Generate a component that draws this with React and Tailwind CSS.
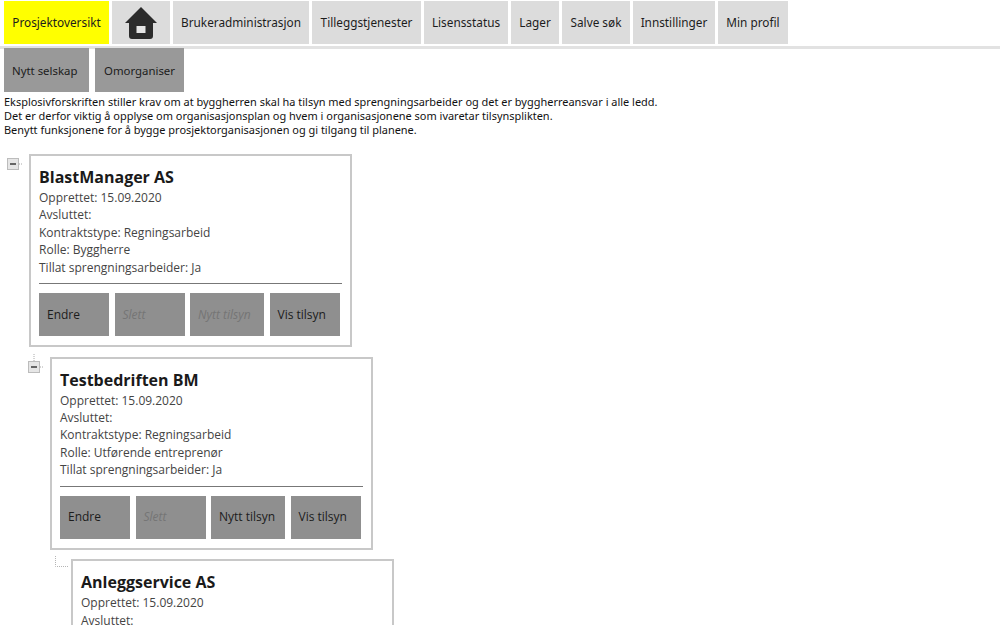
const navItems = [
  { label: 'Brukeradministrasjon', w: 'w-[136px]' },
  { label: 'Tilleggstjenester', w: 'w-[109px]' },
  { label: 'Lisensstatus', w: 'w-[84px]' },
  { label: 'Lager', w: 'w-[48px]' },
  { label: 'Salve søk', w: 'w-[68px]' },
  { label: 'Innstillinger', w: 'w-[82px]' },
  { label: 'Min profil', w: 'w-[70px]' },
];

const companies = [
  { name: 'BlastManager AS', rolle: 'Byggherre', nyttDisabled: true, icon: 'root', indent: 'ml-[7px]', gap: 'gap-[6px]' },
  { name: 'Testbedriften BM', rolle: 'Utførende entreprenør', nyttDisabled: false, icon: 'box', indent: 'ml-[28px]', gap: 'gap-[6px]' },
  { name: 'Anleggservice AS', rolle: 'Utførende entreprenør', nyttDisabled: false, icon: 'corner', indent: 'ml-[55px]', gap: 'gap-[3px]' },
];

function HomeIcon() {
  return (
    <svg width="34" height="34" viewBox="0 0 34 34">
      <path d="M17 1 L33 17 L29 17 L29 30 Q29 33 26 33 L8 33 Q5 33 5 30 L5 17 L1 17 Z" fill="#2b2b2b" />
      <rect x="12.5" y="20" width="9" height="7" fill="#e4e4e4" />
    </svg>
  );
}

function BoxIcon({ stem }) {
  return (
    <svg width="16" height="20" viewBox="0 0 16 20" className="shrink-0 overflow-visible">
      {stem && <path d="M6 -3 V4" stroke="#aaa" strokeDasharray="1 1" />}
      <rect x="0.5" y="4.5" width="11" height="11" fill="#e6e6e6" stroke="#bcbcbc" />
      <rect x="3" y="9" width="6" height="2" fill="#666" />
      <path d="M12 10 H16" stroke="#aaa" strokeDasharray="1 1" />
    </svg>
  );
}

function CornerIcon() {
  return (
    <svg width="13" height="12" viewBox="0 0 13 12" className="shrink-0 -mt-[3px]">
      <path d="M0.5 0 V10.5 H13" fill="none" stroke="#b5b5b5" strokeDasharray="1 1" />
    </svg>
  );
}

function CardButton({ label, disabled, w = 'w-[70px]' }) {
  return (
    <div className={`${w} h-[43px] bg-[#8f8f8f] flex items-center pl-[8px] text-[12px] font-['Open_Sans',sans-serif] ${disabled ? 'italic text-[#757575]' : 'font-medium text-[#1c1c1c]'}`}>
      {label}
    </div>
  );
}

function Card({ c }) {
  return (
    <div className={`${c.indent} flex items-start ${c.gap}`}>
      {c.icon === 'corner' ? <CornerIcon /> : <BoxIcon stem={c.icon === 'box'} />}
      <div className="w-[323px] border-2 border-[#c8c8c8] pt-[9px] pb-[9px] px-[8px] font-['Open_Sans',sans-serif] bg-white">
        <div className="text-[16px] leading-[24px] font-bold text-[#1a1a1a]">{c.name}</div>
        <div className="text-[12px] leading-[17.4px] text-[#444]">
          <div>Opprettet: 15.09.2020</div>
          <div>Avsluttet:</div>
          <div>Kontraktstype: Regningsarbeid</div>
          <div>Rolle: {c.rolle}</div>
          <div>Tillat sprengningsarbeider: Ja</div>
        </div>
        <div className="h-px bg-[#777] mt-[7px] mb-[9px]" />
        <div className="flex gap-[5.5px]">
          <CardButton label="Endre" />
          <CardButton label="Slett" disabled />
          <CardButton label="Nytt tilsyn" disabled={c.nyttDisabled} w="w-[74px]" />
          <CardButton label="Vis tilsyn" />
        </div>
      </div>
    </div>
  );
}

export default function App() {
  return (
    <div className="h-[625px] overflow-hidden bg-white text-black font-['Noto_Sans',sans-serif]">
      {/* top menu */}
      <nav className="flex gap-[3px] pl-[4px] pt-px h-[49px] border-b-[3px] border-[#e2e2e2] text-[11.8px] text-[#1c1c1c]">
        <div className="w-[105px] h-[43px] bg-[#ffff00] flex items-center justify-center pt-[1px]">Prosjektoversikt</div>
        <div className="w-[58px] h-[43px] bg-[#dcdcdc] flex items-center justify-center"><HomeIcon /></div>
        {navItems.map((item) => (
          <div key={item.label} className={`${item.w} h-[43px] bg-[#dcdcdc] flex items-center justify-center pt-[1px]`}>{item.label}</div>
        ))}
      </nav>

      {/* actions */}
      <div className="flex gap-[6px] pl-[4px] -mt-px text-[11.4px] text-[#1c1c1c]">
        <div className="w-[85px] h-[44px] bg-[#999] flex items-center pl-[8px] pt-[1px]">Nytt selskap</div>
        <div className="w-[89px] h-[44px] bg-[#999] flex items-center justify-center pt-[1px]">Omorganiser</div>
      </div>

      <div className="pl-[4px] pt-[3px] text-[10.96px] leading-[14px] text-[#111]">
        <p>Eksplosivforskriften stiller krav om at byggherren skal ha tilsyn med sprengningsarbeider og det er byggherreansvar i alle ledd.</p>
        <p>Det er derfor viktig å opplyse om organisasjonsplan og hvem i organisasjonene som ivaretar tilsynsplikten.</p>
        <p>Benytt funksjonene for å bygge prosjektorganisasjonen og gi tilgang til planene.</p>
      </div>

      {/* tree */}
      <div className="flex flex-col gap-[9.6px] pt-[17px]">
        {companies.map((c) => (
          <Card key={c.name} c={c} />
        ))}
      </div>
    </div>
  );
}
